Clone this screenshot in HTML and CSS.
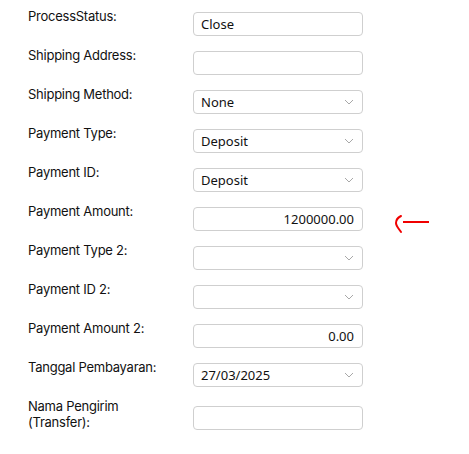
FILE: index.html
```html
<!DOCTYPE html>
<html>
<head>
<meta charset="utf-8">
<link rel="stylesheet" href="styles.css">
</head>
<body>
<div class="form">
  <div class="row">
    <div class="label">ProcessStatus:</div>
    <div class="field">Close</div>
  </div>
  <div class="row">
    <div class="label">Shipping Address:</div>
    <div class="field"></div>
  </div>
  <div class="row">
    <div class="label">Shipping Method:</div>
    <div class="field select">None<svg class="chev" width="10" height="6" viewBox="0 0 10 6"><path d="M1 1 L5 5 L9 1" fill="none" stroke="#a8a8a8" stroke-width="1"/></svg></div>
  </div>
  <div class="row">
    <div class="label">Payment Type:</div>
    <div class="field select">Deposit<svg class="chev" width="10" height="6" viewBox="0 0 10 6"><path d="M1 1 L5 5 L9 1" fill="none" stroke="#a8a8a8" stroke-width="1"/></svg></div>
  </div>
  <div class="row">
    <div class="label">Payment ID:</div>
    <div class="field select">Deposit<svg class="chev" width="10" height="6" viewBox="0 0 10 6"><path d="M1 1 L5 5 L9 1" fill="none" stroke="#a8a8a8" stroke-width="1"/></svg></div>
  </div>
  <div class="row">
    <div class="label">Payment Amount:</div>
    <div class="field num">1200000.00</div>
    <svg class="arrow" width="36" height="24" viewBox="0 0 36 24"><path d="M6 4 C2 6 1 9 1 11 C1 14 4 17 6 20" fill="none" stroke="#f00000" stroke-width="2" stroke-linecap="round"/><path d="M8 10 L34 10" stroke="#f00000" stroke-width="2"/></svg>
  </div>
  <div class="row">
    <div class="label">Payment Type 2:</div>
    <div class="field select"><svg class="chev" width="10" height="6" viewBox="0 0 10 6"><path d="M1 1 L5 5 L9 1" fill="none" stroke="#a8a8a8" stroke-width="1"/></svg></div>
  </div>
  <div class="row">
    <div class="label">Payment ID 2:</div>
    <div class="field select"><svg class="chev" width="10" height="6" viewBox="0 0 10 6"><path d="M1 1 L5 5 L9 1" fill="none" stroke="#a8a8a8" stroke-width="1"/></svg></div>
  </div>
  <div class="row">
    <div class="label">Payment Amount 2:</div>
    <div class="field num">0.00</div>
  </div>
  <div class="row">
    <div class="label">Tanggal Pembayaran:</div>
    <div class="field select">27/03/2025<svg class="chev" width="10" height="6" viewBox="0 0 10 6"><path d="M1 1 L5 5 L9 1" fill="none" stroke="#a8a8a8" stroke-width="1"/></svg></div>
  </div>
  <div class="row tall">
    <div class="label">Nama Pengirim<br>(Transfer):</div>
    <div class="field"></div>
  </div>
</div>
</body>
</html>
```
FILE: styles.css
```css
html, body {
  margin: 0;
  background: #ffffff;
}
.form {
  padding: 8px 0 0 28px;
  display: flex;
  flex-direction: column;
  gap: 11px;
}
.row {
  display: grid;
  grid-template-columns: 165px 170px auto;
  align-items: start;
}
.label {
  font-family: Inter, "Noto Sans", sans-serif;
  font-size: 13px;
  line-height: 16px;
  letter-spacing: -0.25px;
  color: #111;
}
.field {
  position: relative;
  box-sizing: border-box;
  margin-top: 4px;
  height: 24px;
  border: 1px solid #cfcfcf;
  border-radius: 4px;
  padding: 0 8px 0 7px;
  font-family: "Noto Sans", "Liberation Sans", sans-serif;
  font-size: 13px;
  line-height: 22px;
  color: #111;
  background: #fff;
}
.tall .field {
  margin-top: 8px;
}
.num {
  text-align: right;
}
.chev {
  position: absolute;
  right: 8px;
  top: 8px;
}
.arrow {
  margin: 9px 0 -10px 32px;
}
```
